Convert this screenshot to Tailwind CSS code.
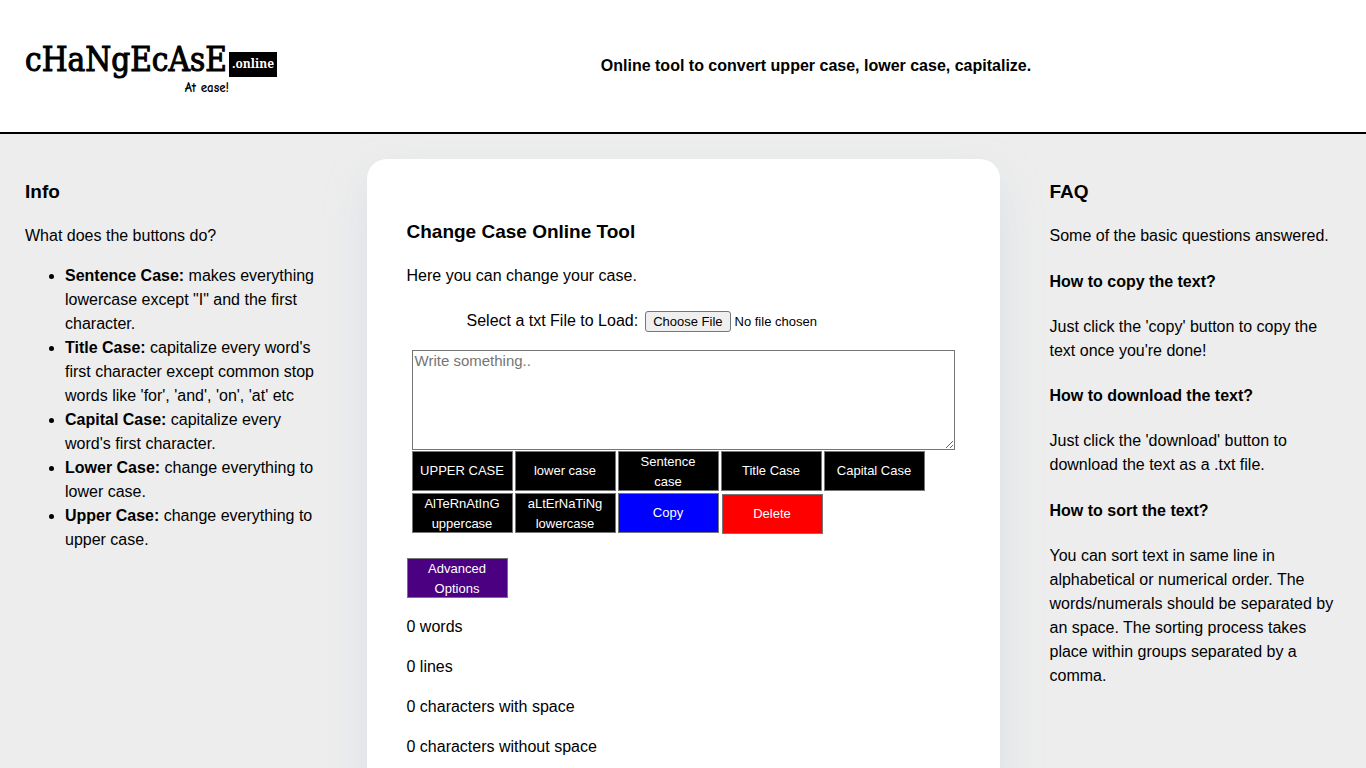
<!DOCTYPE html>
<html lang="en">
<head>
<meta charset="utf-8">
<meta name="viewport" content="width=device-width, initial-scale=1">
<title>Change Case Online</title>
<script src="https://cdn.jsdelivr.net/npm/@tailwindcss/browser@4"></script>
</head>
<body class="min-h-screen overflow-x-hidden bg-[#ededed] font-['Liberation_Sans',Arial,sans-serif] text-base leading-6 text-black">
<header class="flex h-[134px] items-center border-b-2 border-black bg-white px-[25px]">
  <a href="#" class="flex w-[252px] flex-none flex-col pt-1">
    <span class="flex items-center">
      <span class="w-[204px] font-['DejaVu_Serif_Condensed','DejaVu_Serif',serif] text-[33px] leading-10 [-webkit-text-stroke:1px_black]">cHaNgEcAsE</span>
      <span class="mt-2 flex h-[25px] w-12 flex-none items-center justify-center bg-black font-['Noto_Serif','Liberation_Serif',serif] text-xs font-bold text-white">.online</span>
    </span>
    <span class="pr-12 text-right font-['Comic_Neue','Comic_Sans_MS','Open_Sans',sans-serif] text-[13px] leading-4 font-bold">At ease!</span>
  </a>
  <p class="flex-1 pl-3.5 text-center font-bold">Online tool to convert upper case, lower case, capitalize.</p>
</header>
<main class="grid grid-cols-[1fr_2fr_1fr]">
  <section class="px-[25px] pt-11">
    <h3 class="text-[19px] leading-7 font-bold">Info</h3>
    <p class="mt-[18px]">What does the buttons do?</p>
    <ul class="mt-4 list-disc pl-10">
      <li><b>Sentence Case:</b> makes everything lowercase except "I" and the first character.</li>
      <li><b>Title Case:</b> capitalize every word's first character except common stop words like 'for', 'and', 'on', 'at' etc</li>
      <li><b>Capital Case:</b> capitalize every word's first character.</li>
      <li><b>Lower Case:</b> change everything to lower case.</li>
      <li><b>Upper Case:</b> change everything to upper case.</li>
    </ul>
  </section>
  <section class="m-[25px] rounded-[20px] bg-white px-10 pt-[59px] pb-10 shadow-[0_20px_40px_rgba(190,206,220,0.4)]">
    <h3 class="text-[19px] leading-7 font-bold">Change Case Online Tool</h3>
    <p class="mt-[18px]">Here you can change your case.</p>
    <div class="mt-[21px] flex items-center gap-[7px] pl-[60px]">
      <label for="file">Select a txt File to Load:</label>
      <input id="file" type="file" class="h-[21px] w-64 text-[13px] leading-[21px] file:mr-1 file:h-[21px] file:rounded-[3px] file:border file:border-solid file:border-[#767676] file:bg-[#efefef] file:px-[7px] file:text-[13px] file:leading-[19px]">
    </div>
    <div class="mx-[5px] mt-[17px]">
      <textarea aria-label="Text" placeholder="Write something.." class="block h-[100px] w-full resize border border-[#767676] bg-white px-0.5 py-px text-[15px] leading-[17px] placeholder:text-[#757575]"></textarea>
      <div class="mt-px flex flex-wrap gap-0.5 text-[13px] leading-5 text-white">
        <button class="h-10 w-[101px] border border-[#767676] bg-black">UPPER CASE</button>
        <button class="h-10 w-[101px] border border-[#767676] bg-black">lower case</button>
        <button class="h-10 w-[101px] border border-[#767676] bg-black px-4">Sentence case</button>
        <button class="h-10 w-[101px] border border-[#767676] bg-black">Title Case</button>
        <button class="h-10 w-[101px] border border-[#767676] bg-black">Capital Case</button>
        <button class="h-10 w-[101px] border border-[#767676] bg-black">AlTeRnAtInG uppercase</button>
        <button class="h-10 w-[101px] border border-[#767676] bg-black">aLtErNaTiNg lowercase</button>
        <button class="h-10 w-[101px] border border-[#767676] bg-[#0000ff]">Copy</button>
        <button class="mt-px ml-px h-10 w-[101px] border border-[#767676] bg-[#ff0000]">Delete</button>
      </div>
    </div>
    <button class="mt-6 block h-10 w-[101px] border border-[#767676] bg-[#4b0082] px-4 text-[13px] leading-5 text-white">Advanced Options</button>
    <div class="mt-[17px] flex flex-col gap-4">
      <p>0 words</p>
      <p>0 lines</p>
      <p>0 characters with space</p>
      <p>0 characters without space</p>
    </div>
  </section>
  <section class="px-[25px] pt-11">
    <h3 class="text-[19px] leading-7 font-bold">FAQ</h3>
    <p class="mt-[18px]">Some of the basic questions answered.</p>
    <h4 class="mt-[22px] font-bold">How to copy the text?</h4>
    <p class="mt-[21px]">Just click the 'copy' button to copy the text once you're done!</p>
    <h4 class="mt-[21px] font-bold">How to download the text?</h4>
    <p class="mt-[21px]">Just click the 'download' button to download the text as a .txt file.</p>
    <h4 class="mt-[22px] font-bold">How to sort the text?</h4>
    <p class="mt-[21px]">You can sort text in same line in alphabetical or numerical order. The words/numerals should be separated by an space. The sorting process takes place within groups separated by a comma.</p>
  </section>
</main>
</body>
</html>
